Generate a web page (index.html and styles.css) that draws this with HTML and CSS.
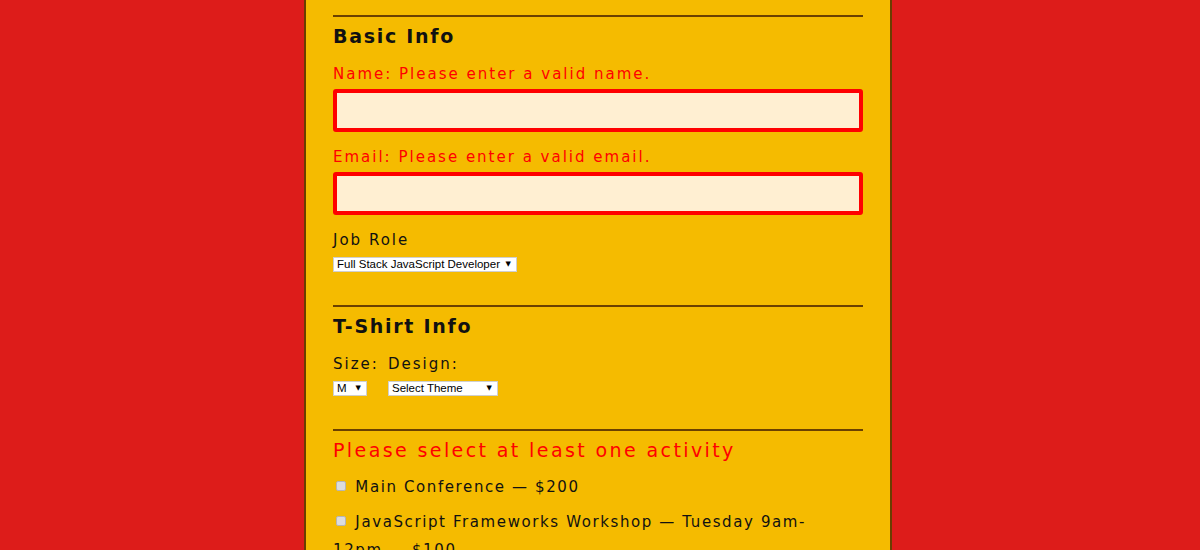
FILE: index.html
```html
<!DOCTYPE html>
<html lang="en">
<head>
<meta charset="utf-8">
<title>Registration Form</title>
<link rel="stylesheet" href="styles.css">
</head>
<body>
<div class="page">
  <form class="form">
    <section class="section">
      <h2 class="legend">Basic Info</h2>
      <label class="label error" for="name">Name: Please enter a valid name.</label>
      <input class="text-input invalid" id="name" type="text">
      <label class="label error" for="mail">Email: Please enter a valid email.</label>
      <input class="text-input invalid" id="mail" type="email">
      <label class="label select-label" for="title">Job Role</label>
      <span class="select-wrap job"><select class="select" id="title"><option>Full Stack JavaScript Developer</option></select></span>
    </section>
    <section class="section">
      <h2 class="legend">T-Shirt Info</h2>
      <div class="shirt-row">
        <div class="shirt-size">
          <label class="label select-label" for="size">Size:</label>
          <span class="select-wrap size"><select class="select" id="size"><option>M</option></select></span>
        </div>
        <div class="shirt-design">
          <label class="label select-label" for="design">Design:</label>
          <span class="select-wrap design"><select class="select" id="design"><option>Select Theme</option></select></span>
        </div>
      </div>
    </section>
    <section class="section">
      <h2 class="legend error-legend">Please select at least one activity</h2>
      <label class="activity"><input class="check" type="checkbox"> Main Conference — $200</label>
      <label class="activity"><input class="check" type="checkbox"> JavaScript Frameworks Workshop — Tuesday 9am-12pm — $100</label>
    </section>
  </form>
</div>
</body>
</html>
```
FILE: styles.css
```css
html, body {
  margin: 0;
  padding: 0;
  background: #dd1c1a;
  height: 550px;
  overflow: hidden;
}

.page {
  width: 530px;
  margin-left: 304px;
  padding: 15px 27px 0;
  background: #f5bb00;
  border-left: 2px solid #6b3d00;
  border-right: 2px solid #6b3d00;
  min-height: 600px;
  font-family: "DejaVu Sans", sans-serif;
  color: #111;
}

.section {
  border-top: 2px solid #6b4000;
  padding-top: 7px;
  padding-bottom: 33px;
  display: flex;
  flex-direction: column;
  align-items: flex-start;
}

.legend {
  margin: 0 0 17px;
  font-size: 19px;
  line-height: 24px;
  font-weight: bold;
  letter-spacing: 1.7px;
}

.error-legend {
  color: #ff0000;
  font-weight: normal;
  letter-spacing: 2.4px;
  margin-bottom: 11px;
}

.label {
  display: block;
  font-size: 15px;
  line-height: 18px;
  letter-spacing: 2px;
  margin-bottom: 6px;
}

.select-label {
  margin-bottom: 8px;
}

.error {
  color: #ff0000;
}

.text-input {
  box-sizing: border-box;
  width: 530px;
  height: 43px;
  margin: 0 0 16px;
  background: #ffefd2;
  border: 4px solid #ff0000;
  border-radius: 3px;
  outline: none;
}

.select-wrap {
  position: relative;
  display: block;
  width: fit-content;
}

.select-wrap::after {
  content: "▼";
  position: absolute;
  right: 6px;
  top: 3px;
  font-family: "DejaVu Sans", sans-serif;
  font-size: 7px;
  line-height: 9px;
  color: #000;
  pointer-events: none;
}

.select {
  -webkit-appearance: none;
  appearance: none;
  display: block;
  box-sizing: border-box;
  height: 15px;
  margin: 0;
  padding: 0 0 0 3px;
  border: 1px solid #cfcfcf;
  border-radius: 0;
  background: #fff;
  font-family: "Liberation Sans", Arial, sans-serif;
  font-size: 11.5px;
  line-height: 13px;
  color: #000;
}

.job .select { width: 184px; }
.size .select { width: 34px; }
.design .select { width: 110px; }

.shirt-row {
  display: flex;
}

.shirt-size { width: 55px; }

.activity {
  display: block;
  width: 505px;
  font-size: 15px;
  line-height: 28px;
  letter-spacing: 1.6px;
  margin-bottom: 7px;
}

.check {
  -webkit-appearance: none;
  appearance: none;
  width: 10px;
  height: 10px;
  margin: 0 3px 0 3px;
  background: #dcdcdc;
  border: 1px solid #b5b5b5;
  border-radius: 2px;
  vertical-align: 1px;
}
```
